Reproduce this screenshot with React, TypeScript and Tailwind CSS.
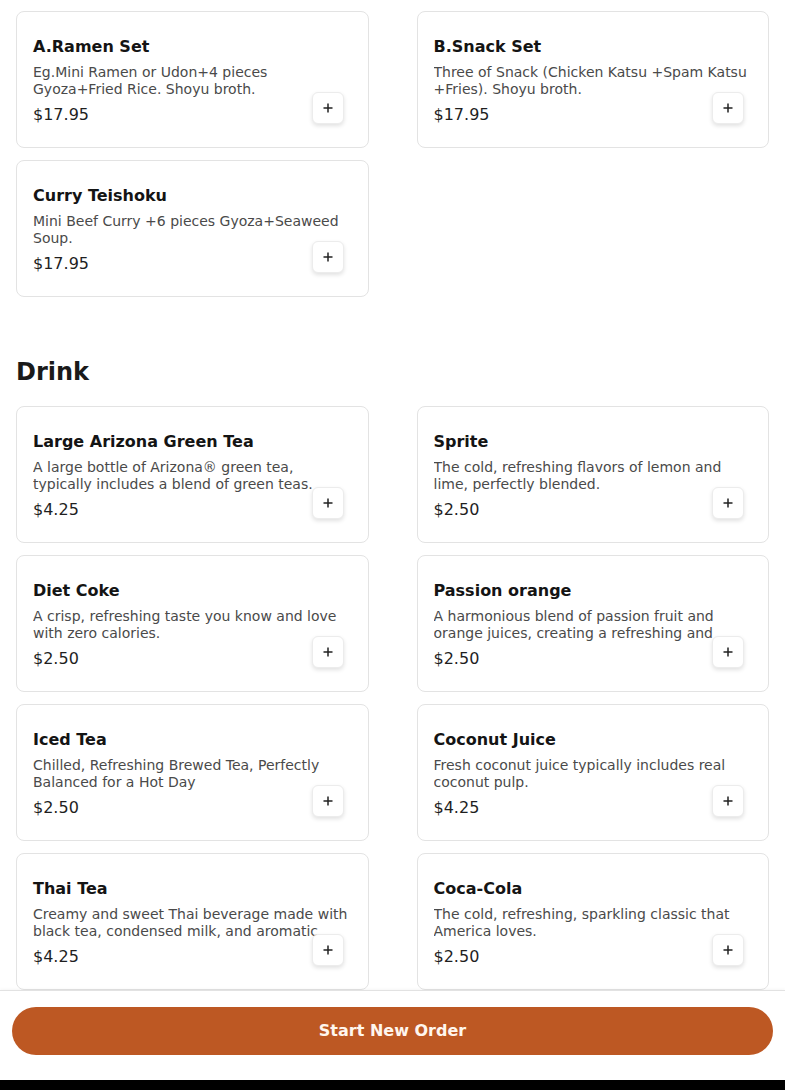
const sets = [
  {
    name: "A.Ramen Set",
    description: "Eg.Mini Ramen or Udon+4 pieces Gyoza+Fried Rice. Shoyu broth.",
    price: "$17.95",
  },
  {
    name: "B.Snack Set",
    description: "Three of Snack (Chicken Katsu +Spam Katsu +Fries). Shoyu broth.",
    price: "$17.95",
  },
  {
    name: "Curry Teishoku",
    description: "Mini Beef Curry +6 pieces Gyoza+Seaweed Soup.",
    price: "$17.95",
  },
]

const drinks = [
  {
    name: "Large Arizona Green Tea",
    description: "A large bottle of Arizona® green tea, typically includes a blend of green teas.",
    price: "$4.25",
  },
  {
    name: "Sprite",
    description: "The cold, refreshing flavors of lemon and lime, perfectly blended.",
    price: "$2.50",
  },
  {
    name: "Diet Coke",
    description: "A crisp, refreshing taste you know and love with zero calories.",
    price: "$2.50",
  },
  {
    name: "Passion orange",
    description:
      "A harmonious blend of passion fruit and orange juices, creating a refreshing and tropical drink.",
    price: "$2.50",
  },
  {
    name: "Iced Tea",
    description: "Chilled, Refreshing Brewed Tea, Perfectly Balanced for a Hot Day",
    price: "$2.50",
  },
  {
    name: "Coconut Juice",
    description: "Fresh coconut juice typically includes real coconut pulp.",
    price: "$4.25",
  },
  {
    name: "Thai Tea",
    description:
      "Creamy and sweet Thai beverage made with black tea, condensed milk, and aromatic spices.",
    price: "$4.25",
  },
  {
    name: "Coca-Cola",
    description: "The cold, refreshing, sparkling classic that America loves.",
    price: "$2.50",
  },
]

type Item = { name: string; description: string; price: string }

function ItemCard({ item }: { item: Item }) {
  return (
    <div className="relative rounded-lg border border-[#e3e3e3] bg-white px-4 pt-[23px] pb-[20px]">
      <h3 className="text-base leading-6 font-bold text-[#141414]">{item.name}</h3>
      <p className="mt-[5px] h-[34px] overflow-hidden pr-1 text-sm leading-[17px] text-[#4a4a4a]">
        {item.description}
      </p>
      <div className="mt-[5px] text-base leading-6 text-[#1f1f1f]">{item.price}</div>
      <button className="absolute right-6 bottom-[23px] flex h-8 w-8 items-center justify-center rounded-md border border-[#ececec] bg-white shadow-[0_2px_4px_rgba(0,0,0,0.12)]">
        <svg width="10" height="10" viewBox="0 0 10 10" fill="none">
          <path d="M5 0.5v9M0.5 5h9" stroke="#222" strokeWidth="1.5" />
        </svg>
      </button>
    </div>
  )
}

export default function App() {
  return (
    <div
      className="min-h-[1090px] bg-white"
      style={{ fontFamily: '"DejaVu Sans", sans-serif' }}
    >
      <div className="px-4 pt-[11px] pb-[120px]">
        <div className="grid grid-cols-2 gap-x-12 gap-y-3">
          {sets.map((item) => (
            <ItemCard key={item.name} item={item} />
          ))}
        </div>

        <h2 className="mt-[59px] mb-[18px] text-2xl leading-8 font-bold text-[#1a1a1a]">Drink</h2>
        <div className="grid grid-cols-2 gap-x-12 gap-y-3">
          {drinks.map((item) => (
            <ItemCard key={item.name} item={item} />
          ))}
        </div>
      </div>

      <div className="fixed inset-x-0 bottom-0">
        <div className="border-t border-[#e2e2e2] bg-white px-3 pt-4 pb-[25px] shadow-[0_-1px_3px_rgba(0,0,0,0.04)]">
          <button className="flex h-12 w-full items-center justify-center rounded-full bg-[#bd5823] text-base font-bold text-[#fff6ee]">
            Start New Order
          </button>
        </div>
        <div className="h-[10px] bg-black" />
      </div>
    </div>
  )
}
